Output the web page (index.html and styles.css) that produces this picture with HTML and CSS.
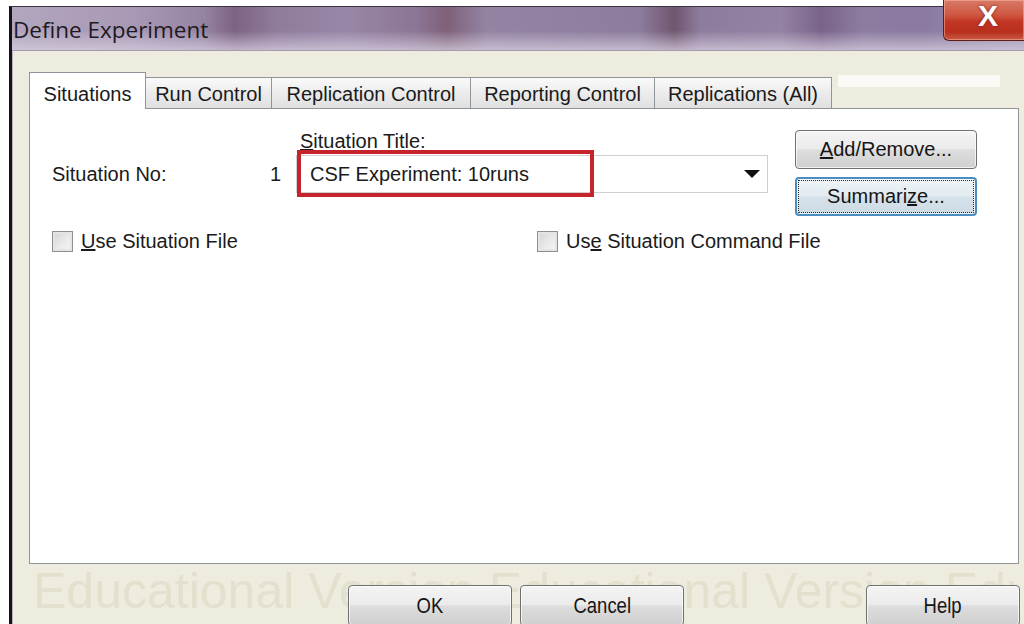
FILE: index.html
```html
<!DOCTYPE html>
<html lang="en">
<head>
<meta charset="utf-8">
<title>Define Experiment</title>
<link rel="stylesheet" href="styles.css">
</head>
<body>
<div class="window">
  <div class="titlebar">
    <span class="title">Define Experiment</span>
    <button class="close" type="button">X</button>
  </div>
  <div class="client">
    <div class="tabs">
      <div class="tab tab-situations active">Situations</div>
      <div class="tab tab-run">Run Control</div>
      <div class="tab tab-replication">Replication Control</div>
      <div class="tab tab-reporting">Reporting Control</div>
      <div class="tab tab-replications">Replications (All)</div>
      <div class="tab-rest"></div>
    </div>
    <div class="panel">
      <div class="row-top">
        <div class="no-group">
          <span>Situation No:</span>
          <span class="no-value">1</span>
        </div>
        <div class="title-group">
          <label class="field-label"><u>S</u>ituation Title:</label>
          <div class="combo">
            <span class="combo-text">CSF Experiment: 10runs</span>
            <span class="combo-arrow"></span>
            <span class="highlight"></span>
          </div>
        </div>
        <div class="side-buttons">
          <button class="btn" type="button"><u>A</u>dd/Remove...</button>
          <button class="btn focused" type="button">Summari<u>z</u>e...</button>
        </div>
      </div>
      <div class="row-checks">
        <label class="check first"><span class="box"></span><span><u>U</u>se Situation File</span></label>
        <label class="check"><span class="box"></span><span>Us<u>e</u> Situation Command File</span></label>
      </div>
    </div>
    <div class="footer">
      <div class="watermark">Educational Version Educational Version Educational Version</div>
      <button class="btn wide" type="button"><span class="narrow">OK</span></button>
      <button class="btn wide" type="button"><span class="narrow">Cancel</span></button>
      <button class="btn help" type="button"><span class="narrow">Help</span></button>
    </div>
  </div>
</div>
</body>
</html>
```
FILE: styles.css
```css
* {
  box-sizing: border-box;
}

html,
body {
  margin: 0;
  padding: 0;
}

body {
  width: 1024px;
  height: 624px;
  overflow: hidden;
  background: #ffffff;
  font-family: "Liberation Sans", Arial, sans-serif;
  font-size: 20px;
  color: #1a1a1a;
}

/* window frame */
.window {
  margin: 6px 0 0 9px;
  height: 618px;
  border-left: 3px solid #141217;
  border-top: 1px solid #3b3542;
  display: flex;
  flex-direction: column;
}

.titlebar {
  height: 43px;
  flex: 0 0 43px;
  display: flex;
  align-items: flex-start;
  background:
    linear-gradient(180deg, rgba(255, 255, 255, 0) 0%, rgba(255, 255, 255, 0) 55%, rgba(214, 206, 222, 0.75) 100%),
    linear-gradient(90deg, #b2a6be 0%, #a898b5 12%, #9583a3 19%, #7d6283 22%, #8f7b9c 26%, #9887a8 33%, #8c7595 40%, #7f6178 43%, #9484a4 47%, #8f7fa0 56%, #8c7c9e 62%, #70566f 65.5%, #8e7c9e 68%, #9282a3 76%, #7a6389 80%, #8c7ca0 84%, #8a7aa0 90%, #a093b3 100%);
}

.title {
  font-family: "Open Sans", "Noto Sans", sans-serif;
  font-size: 22.5px;
  line-height: 28px;
  color: #1d1a22;
  padding: 9px 0 0 1px;
}

.close {
  margin: -7px 0 0 auto;
  width: 81px;
  height: 41px;
  border: 1px solid #5e1d17;
  border-top: none;
  border-right: none;
  border-radius: 0 0 0 6px;
  background: linear-gradient(180deg, #d77a66 0%, #cf5a45 35%, #c23524 55%, #b8301f 80%, #c95a44 100%);
  box-shadow: inset 0 0 0 1px rgba(255, 190, 170, 0.5);
  color: #ffffff;
  font-family: "Liberation Sans", Arial, sans-serif;
  font-weight: bold;
  font-size: 30px;
  line-height: 30px;
  padding: 0 0 8px 8px;
  text-shadow: 0 0 3px #7a1c12;
}

/* dialog client area */
.client {
  flex: 1;
  display: flex;
  flex-direction: column;
  background: #eeebdf;
  border-top: 1px solid #a39cab;
  border-left: 1px solid #b9b3bf;
  padding: 21px 5px 0 16px;
}

.tabs {
  display: flex;
  align-items: flex-end;
  height: 37px;
  margin-bottom: -1px;
  position: relative;
  z-index: 1;
}

.tab {
  height: 31px;
  margin-bottom: 1px;
  border: 1px solid #8f959a;
  border-left-width: 0;
  border-bottom: none;
  background: linear-gradient(180deg, #fafafa 0%, #ececec 50%, #e0e0e0 100%);
  display: flex;
  align-items: flex-end;
  justify-content: center;
  line-height: 22px;
  padding-bottom: 3px;
  white-space: nowrap;
}

.tab.active {
  height: 37px;
  margin-bottom: 0;
  border-left-width: 1px;
  background: #ffffff;
  padding-bottom: 4px;
}

.tab-situations { width: 117px; }
.tab-run { width: 126px; }
.tab-replication { width: 199px; }
.tab-reporting { width: 184px; }
.tab-replications { width: 177px; }

.tab-rest {
  align-self: flex-start;
  margin: 3px 0 0 6px;
  width: 162px;
  height: 12px;
  background: rgba(255, 255, 255, 0.75);
}

.panel {
  height: 456px;
  flex: 0 0 456px;
  background: #ffffff;
  border: 1px solid #8e959a;
  padding: 21px 0 0 22px;
}

.row-top {
  display: flex;
  align-items: flex-start;
}

.no-group {
  width: 244px;
  margin-top: 25px;
  height: 38px;
  line-height: 38px;
  display: flex;
  justify-content: space-between;
  padding-right: 15px;
}

.title-group {
  width: 472px;
  display: flex;
  flex-direction: column;
}

.field-label {
  margin: 1px 0 4px;
  line-height: 20px;
  padding-left: 4px;
}

.combo {
  position: relative;
  height: 38px;
  border: 1px solid #cfcfcf;
  display: flex;
  align-items: center;
  padding-left: 13px;
}

.combo-arrow {
  margin-left: auto;
  margin-right: 7px;
  width: 0;
  height: 0;
  border-left: 8px solid transparent;
  border-right: 8px solid transparent;
  border-top: 8px solid #111111;
}

/* red marker drawn over the start of the combo box */
.highlight {
  position: absolute;
  left: 0;
  top: -6px;
  width: 297px;
  height: 47px;
  border: 4px solid #c5242c;
}

.side-buttons {
  margin-left: 27px;
  display: flex;
  flex-direction: column;
  gap: 8px;
}

.btn {
  font-family: "Liberation Sans", Arial, sans-serif;
  font-size: 20px;
  color: #151515;
  border: 1px solid #707070;
  border-radius: 4px;
  background: linear-gradient(180deg, #f4f4f4 0%, #ebebeb 48%, #dddddd 52%, #cfcfcf 100%);
  box-shadow: inset 0 0 0 1px rgba(255, 255, 255, 0.7);
  padding: 0;
}

.side-buttons .btn {
  width: 182px;
  height: 39px;
}

.btn.focused {
  border: 2px solid #4a8dc2;
  background: linear-gradient(180deg, #eef4f8 0%, #e2ebf1 48%, #d6e2ea 52%, #cddbe5 100%);
  outline: 1px dotted #2a2a2a;
  outline-offset: -4px;
}

.row-checks {
  display: flex;
  align-items: center;
  margin-top: 14px;
}

.check {
  display: flex;
  align-items: center;
  height: 22px;
}

.check.first {
  width: 485px;
}

.box {
  width: 21px;
  height: 21px;
  margin-right: 8px;
  border: 1px solid #8f8f8f;
  background: linear-gradient(135deg, #d2d2d2 0%, #e8e8e8 50%, #f6f6f6 100%);
  box-shadow: inset 0 0 0 2px #e4e4e4;
}

/* bottom button row */
.footer {
  flex: 1;
  position: relative;
  display: flex;
  align-items: flex-start;
  gap: 8px;
  padding: 21px 0 0 319px;
  margin-right: -1px;
}

.watermark {
  position: absolute;
  left: 4px;
  top: 2px;
  font-family: "Liberation Sans", Arial, sans-serif;
  font-size: 50px;
  line-height: 50px;
  color: #e4e0ce;
  white-space: nowrap;
  overflow: hidden;
  width: 987px;
}

.footer .btn {
  position: relative;
  height: 41px;
  font-size: 22px;
}

.narrow {
  display: inline-block;
  transform: scaleX(0.84);
}

.btn.wide {
  width: 164px;
}

.btn.help {
  width: 154px;
  margin-left: auto;
}
```
